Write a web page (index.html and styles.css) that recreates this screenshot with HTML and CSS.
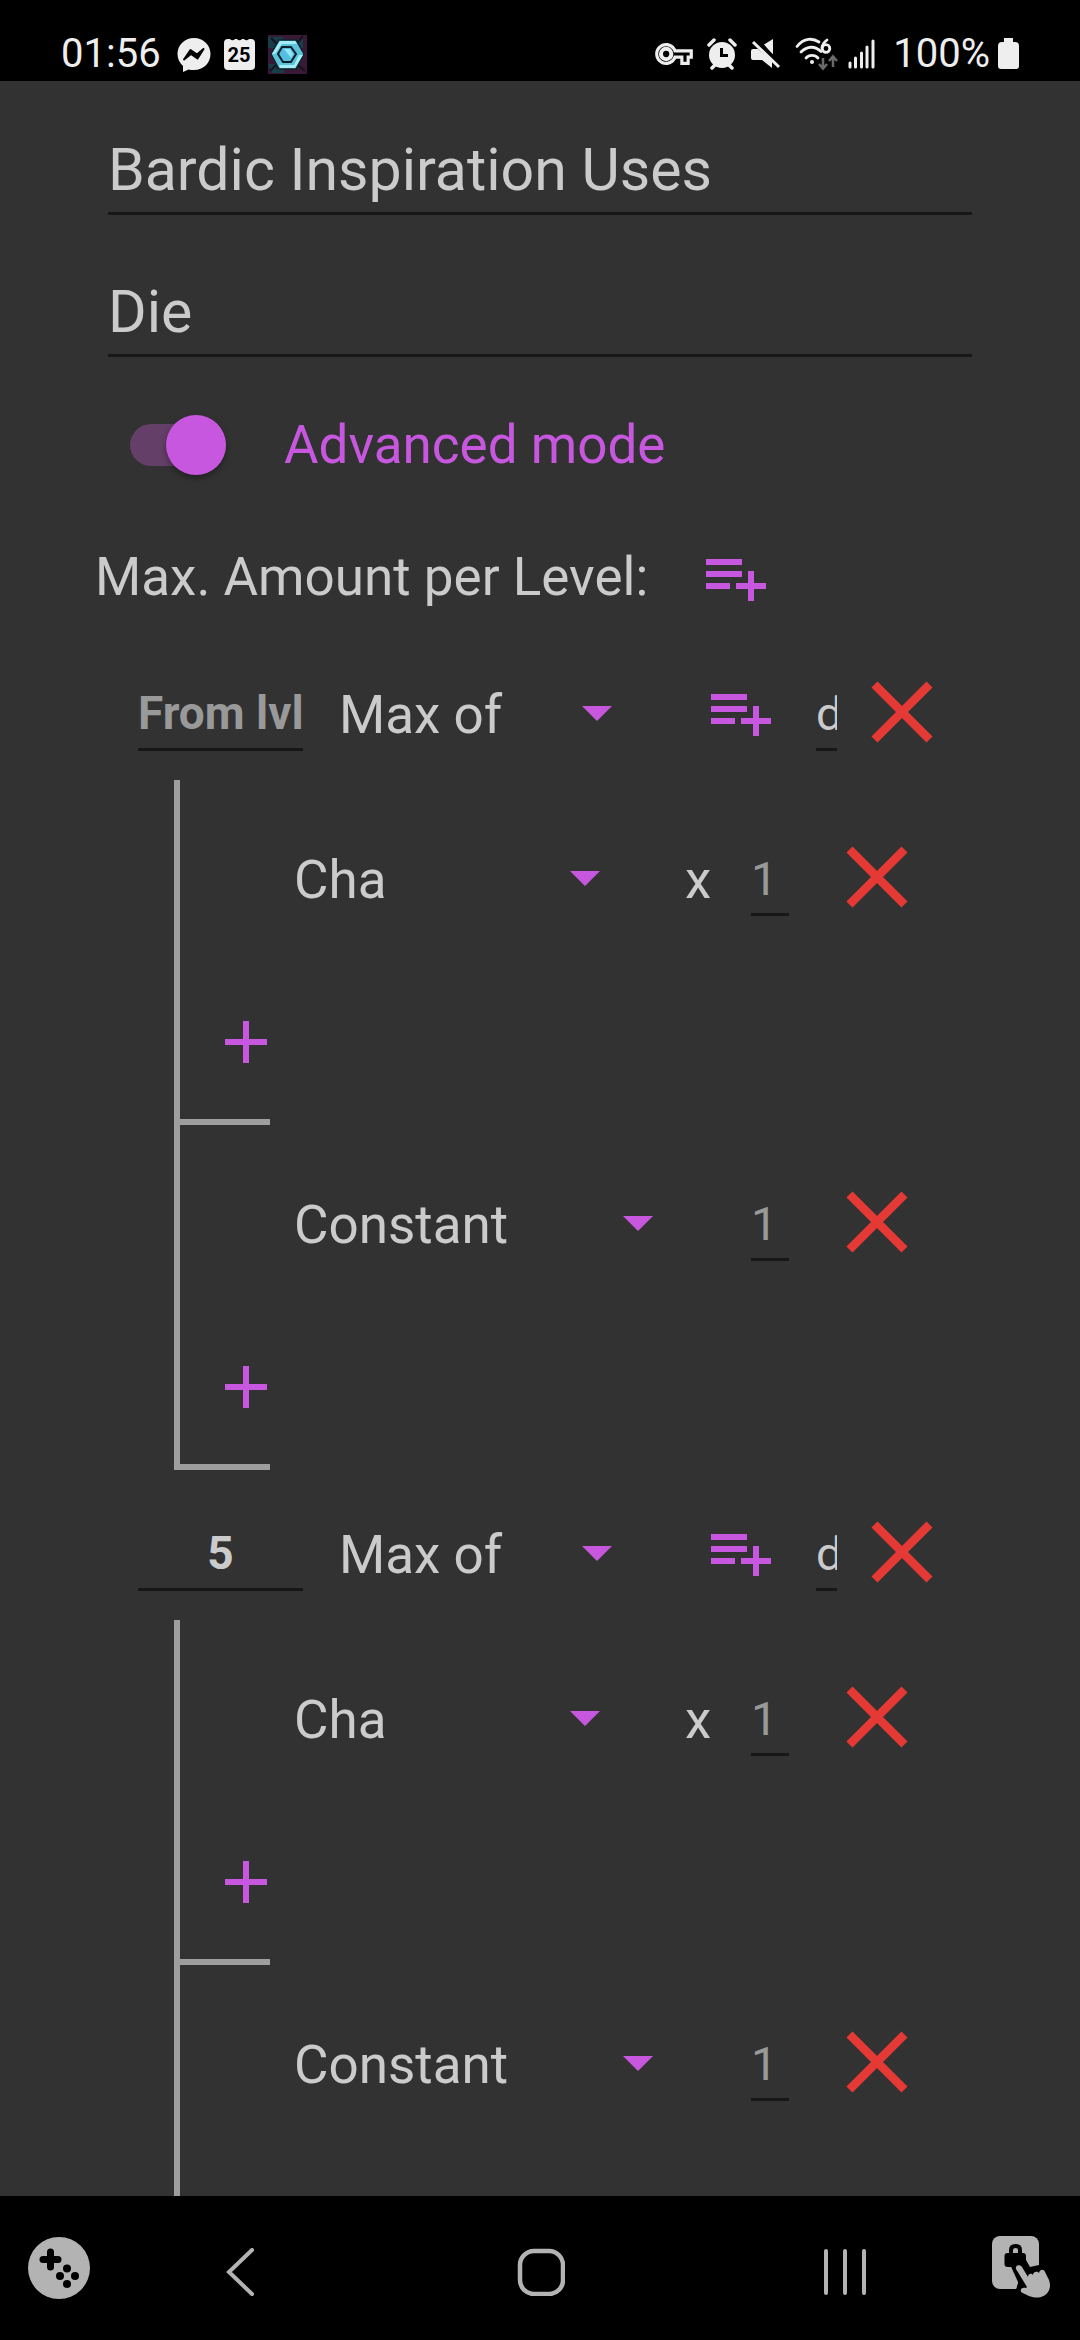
FILE: index.html
```html
<!DOCTYPE html>
<html lang="en">
<head>
  <meta charset="UTF-8">
  <meta name="viewport" content="width=device-width, initial-scale=1.0">
  <title>Bardic Inspiration Uses</title>
  <link rel="stylesheet" href="styles.css">
</head>
<body>
  <!-- shared icons -->
  <svg class="sprite" aria-hidden="true">
    <symbol id="playlist-add" viewBox="0 0 24 24">
      <path d="M14 10H2v2h12v-2zm0-4H2v2h12V6zm4 8v-4h-2v4h-4v2h4v4h2v-4h4v-2h-4zM2 16h8v-2H2v2z"/>
    </symbol>
    <symbol id="plus" viewBox="0 0 24 24">
      <path d="M19 13h-6v6h-2v-6H5v-2h6V5h2v6h6v2z"/>
    </symbol>
    <symbol id="cross" viewBox="0 0 72 72">
      <path d="M8.500 8.500L63.500 63.500M63.500 8.500L8.500 63.500" fill="none" stroke="currentColor" stroke-width="8.500"/>
    </symbol>
    <symbol id="caret" viewBox="0 0 24 24">
      <path d="M7 10l5 5 5-5z"/>
    </symbol>
  </svg>

  <header class="status-bar">
    <span class="status-text">01:56</span>
    <div class="status-left">
      <svg width="34" height="40" viewBox="0 0 34 40">
        <path fill="#eee" d="M17 4C7.500 4 .5 11 .5 20c0 5 2.200 9 5.500 12v6l5.500-2.600c1.700.4 3.500.6 5.500.6 9.500 0 16.500-7 16.500-16S26.500 4 17 4z"/>
        <path d="M7 25.500L13.500 16l6.500 4.500 6.500-5.500-6 9.500-6.500-4.500z" fill="#000" stroke="#000" stroke-width="2" stroke-linejoin="round"/>
      </svg>
      <svg width="31" height="40" viewBox="0 0 31 40">
        <path fill="#eee" d="M4 5h2a3 3 0 0 0 5 0h2a3 3 0 0 0 5 0h2a3 3 0 0 0 5 0h2q4 0 4 4v23q0 4-4 4H4q-4 0-4-4V9q0-4 4-4z"/>
        <text class="calendar-day" x="15" y="28" text-anchor="middle">25</text>
      </svg>
      <svg width="39" height="40" viewBox="0 0 39 40">
        <path fill="#391a36" d="M0 1h39v39H0z"/>
        <path fill="#173d49" d="M0 3h15v5H7v6H0zM30 5h5v9h-5zM0 30h8v5h8v4H4z"/>
        <path d="M3 4l9 9M2 37l8-8M29 9l6-7M30 31l7 6" stroke="#15151f" stroke-width="2"/>
        <path fill="#5bc3da" stroke="#12222c" stroke-width="1.500" d="M11 6h17l8 14-8 15H11L3 20z"/>
        <path fill="#a3edf5" d="M12 7h15l2 3H14L7 20l-3 0zM31 21h4l-8 13H12l-1-3h15z"/>
        <path fill="#54bfe0" stroke="#10212c" stroke-width="2" d="M14 13h9l5 7-5 8h-8l-5-8z"/>
        <path fill="#92e5f2" d="M16 15h6l3 5-2 4z"/>
      </svg>
    </div>
    <div class="status-right">
      <svg width="38" height="22" viewBox="0 5 24 14">
        <path fill="#eee" d="M22 19h-6v-4h-2.680c-1.140 2.420-3.600 4-6.320 4-3.860 0-7-3.140-7-7s3.140-7 7-7c2.720 0 5.170 1.580 6.320 4H24v6h-2v4zm-4-2h2v-4h2v-2H11.940l-.23-.67C11.010 8.340 9.110 7 7 7c-2.760 0-5 2.240-5 5s2.240 5 5 5c2.110 0 4.010-1.340 4.710-3.330l.23-.67H18v4z"/>
        <circle cx="7" cy="12" r="3.300" fill="none" stroke="#eee" stroke-width="2.600"/>
      </svg>
      <svg width="30" height="40" viewBox="0 0 30 40">
        <circle cx="15" cy="21" r="13" fill="#eee"/>
        <path d="M2 11l5-5M28 11l-5-5M5 34l4-4M25 34l-4-4" stroke="#eee" stroke-width="3.500" stroke-linecap="round"/>
        <path d="M14.500 14v7.500h6.500" fill="none" stroke="#000" stroke-width="3"/>
      </svg>
      <svg width="30" height="40" viewBox="0 0 30 40">
        <path fill="#eee" d="M13 10.500L22 5v16z"/>
        <path fill="#eee" d="M2 15h5l14 12v7L11 26H2q-2 0-2-2v-7q0-2 2-2z"/>
        <path d="M4 5l27 26" stroke="#000" stroke-width="3"/>
        <path d="M2 8l26 25" stroke="#eee" stroke-width="3"/>
      </svg>
      <svg class="wifi" width="43" height="40" viewBox="0 0 43 40">
        <g fill="none" stroke="#eee" stroke-width="2.800" stroke-linecap="round">
          <path d="M2 12.500C9 3.500 18 4 24 8"/>
          <path d="M6 18c6-6 14-6.500 20-.5"/>
          <path d="M11 24c3-3.500 9-3.500 12 0"/>
          <path d="M32 6c-4 3-5 6-5 8"/>
          <circle cx="31" cy="14.500" r="3.800"/>
        </g>
        <circle cx="17" cy="28" r="2" fill="#eee"/>
        <path d="M28 24v10m-4-4l4 4.500 4-4.500M38 33V23m-4 4l4-4.500 4 4.500" fill="none" stroke="#6a6a6a" stroke-width="2.500"/>
      </svg>
      <svg width="27" height="40" viewBox="0 0 27 40">
        <path d="M2 29v4M7.500 24v9M13.500 19v14M19 13v20M25 7v26" stroke="#eee" stroke-width="3" stroke-linecap="round"/>
      </svg>
      <div class="battery">
        <span class="status-text">100%</span>
        <svg width="21" height="40" viewBox="0 0 21 40">
          <path fill="#eee" d="M6 4h9v4h2q4 0 4 4v20q0 3-3 3H3q-3 0-3-3V12q0-4 4-4h2z"/>
        </svg>
      </div>
    </div>
  </header>

  <main class="content">
    <div class="fields">
      <input class="field" type="text" value="Bardic Inspiration Uses" aria-label="Name">
      <input class="field" type="text" value="Die" aria-label="Type">
    </div>

    <div class="switch-row">
      <input class="switch" type="checkbox" id="advanced-mode" checked>
      <label for="advanced-mode">Advanced mode</label>
    </div>

    <div class="levels-title">
      <span>Max. Amount per Level:</span>
      <button class="icon-btn" aria-label="Add level"><svg><use href="#playlist-add"/></svg></button>
    </div>

    <section class="level">
      <div class="level-head">
        <input class="small-input level-input" type="text" placeholder="From lvl" aria-label="From level">
        <div class="dropdown level-dropdown">
          <select aria-label="Operation"><option>Max of</option></select>
          <svg><use href="#caret"/></svg>
        </div>
        <button class="icon-btn add-btn" aria-label="Add term"><svg><use href="#playlist-add"/></svg></button>
        <input class="small-input die-input" type="text" value="d" aria-label="Die">
        <button class="icon-btn delete-btn" aria-label="Delete level"><svg><use href="#cross"/></svg></button>
      </div>
      <div class="tree">
        <div class="term">
          <div class="term-row">
            <div class="term-source">
              <div class="dropdown stat-dropdown">
                <select aria-label="Source"><option>Cha</option></select>
                <svg><use href="#caret"/></svg>
              </div>
              <span class="times">x</span>
            </div>
            <input class="small-input" type="text" placeholder="1" aria-label="Factor">
            <button class="icon-btn delete-btn" aria-label="Delete term"><svg><use href="#cross"/></svg></button>
          </div>
          <button class="icon-btn plus-btn" aria-label="Add"><svg><use href="#plus"/></svg></button>
        </div>
        <div class="term">
          <div class="term-row">
            <div class="term-source">
              <div class="dropdown constant-dropdown">
                <select aria-label="Source"><option>Constant</option></select>
                <svg><use href="#caret"/></svg>
              </div>
            </div>
            <input class="small-input" type="text" placeholder="1" aria-label="Value">
            <button class="icon-btn delete-btn" aria-label="Delete term"><svg><use href="#cross"/></svg></button>
          </div>
          <button class="icon-btn plus-btn" aria-label="Add"><svg><use href="#plus"/></svg></button>
        </div>
      </div>
    </section>

    <section class="level">
      <div class="level-head">
        <input class="small-input level-input" type="text" value="5" placeholder="From lvl" aria-label="From level">
        <div class="dropdown level-dropdown">
          <select aria-label="Operation"><option>Max of</option></select>
          <svg><use href="#caret"/></svg>
        </div>
        <button class="icon-btn add-btn" aria-label="Add term"><svg><use href="#playlist-add"/></svg></button>
        <input class="small-input die-input" type="text" value="d" aria-label="Die">
        <button class="icon-btn delete-btn" aria-label="Delete level"><svg><use href="#cross"/></svg></button>
      </div>
      <div class="tree">
        <div class="term">
          <div class="term-row">
            <div class="term-source">
              <div class="dropdown stat-dropdown">
                <select aria-label="Source"><option>Cha</option></select>
                <svg><use href="#caret"/></svg>
              </div>
              <span class="times">x</span>
            </div>
            <input class="small-input" type="text" placeholder="1" aria-label="Factor">
            <button class="icon-btn delete-btn" aria-label="Delete term"><svg><use href="#cross"/></svg></button>
          </div>
          <button class="icon-btn plus-btn" aria-label="Add"><svg><use href="#plus"/></svg></button>
        </div>
        <div class="term">
          <div class="term-row">
            <div class="term-source">
              <div class="dropdown constant-dropdown">
                <select aria-label="Source"><option>Constant</option></select>
                <svg><use href="#caret"/></svg>
              </div>
            </div>
            <input class="small-input" type="text" placeholder="1" aria-label="Value">
            <button class="icon-btn delete-btn" aria-label="Delete term"><svg><use href="#cross"/></svg></button>
          </div>
          <button class="icon-btn plus-btn" aria-label="Add"><svg><use href="#plus"/></svg></button>
        </div>
      </div>
    </section>
  </main>

  <nav class="nav-bar">
    <button aria-label="Game tools">
      <svg width="62" height="62" viewBox="0 0 62 62">
        <circle cx="31" cy="31" r="31" fill="#b3b3b3"/>
        <path d="M22.500 15v15M15 22.500h15" stroke="#000" stroke-width="7" stroke-linecap="round"/>
        <circle cx="39" cy="31.500" r="4"/>
        <circle cx="32" cy="39" r="4"/>
        <circle cx="47" cy="39" r="4"/>
        <circle cx="39" cy="47" r="4"/>
      </svg>
    </button>
    <div class="nav-main">
      <button aria-label="Back">
        <svg width="48" height="48" viewBox="0 0 48 48">
          <path d="M36 2L13 24l23 22" fill="none" stroke="#b3b3b3" stroke-width="4" stroke-linecap="round"/>
        </svg>
      </button>
      <button aria-label="Home">
        <svg width="48" height="48" viewBox="0 0 48 48">
          <rect x="3" y="3" width="43" height="43" rx="14" fill="none" stroke="#b3b3b3" stroke-width="4.500"/>
        </svg>
      </button>
      <button aria-label="Recents">
        <svg width="48" height="48" viewBox="0 0 48 48">
          <path d="M8 3v42M27 3v42M46 3v42" fill="none" stroke="#b3b3b3" stroke-width="4" stroke-linecap="round"/>
        </svg>
      </button>
    </div>
    <button aria-label="Touch lock">
      <svg width="60" height="66" viewBox="0 0 60 66">
        <rect x="0" y="1" width="47" height="53" rx="8" fill="#b3b3b3"/>
        <path d="M47 30l-9 2-4-7H16l10 22-2 7v4h25z" fill="#000"/>
        <rect x="12.500" y="18" width="21.500" height="14" rx="3"/>
        <path d="M19 19v-4q0-4 4.500-4t4.500 4v4" fill="none" stroke="#000" stroke-width="4"/>
        <path d="M17 33l9 15-2 6H12V33z" fill="#b3b3b3"/>
        <path fill="#b3b3b3" d="M24 34c-1-4 4-5 6-2l6 10c0-4 4-4 5-2 0-4 5-4 6-2 1-4 5-4 6-1l4 8c3 8-1 15-8 17-8 2-14-2-20-5-1-3 1-5 5-4l1-1z"/>
      </svg>
    </button>
  </nav>
</body>
</html>
```
FILE: styles.css
```css
* {
  margin: 0;
  padding: 0;
  box-sizing: border-box;
}

body {
  height: 100vh;
  display: flex;
  flex-direction: column;
  background: #323232;
  color: #cbcbcb;
  font-family: Roboto, sans-serif;
  font-size: 53px;
  line-height: 64px;
}

input,
select,
button {
  font: inherit;
  color: inherit;
  background: transparent;
  border: none;
  border-radius: 0;
  outline: none;
}

button {
  display: block;
  cursor: pointer;
}

svg {
  display: block;
}

.sprite {
  display: none;
}

/* status bar */
.status-bar {
  display: flex;
  flex-shrink: 0;
  align-items: center;
  justify-content: space-between;
  padding: 27px 61px 0;
  height: 81px;
  background: #000;
  color: #eee;
}

.status-text {
  font-size: 40px;
  line-height: 48px;
}

.status-left,
.status-right,
.battery {
  display: flex;
  align-items: center;
}

.status-left {
  gap: 13px;
  margin-left: 16px;
  margin-right: auto;
}

.status-right {
  gap: 14px;
}

.wifi {
  margin-right: -4px;
}

.battery {
  gap: 8px;
  padding-left: 4px;
}

.calendar-day {
  font-size: 20px;
  font-weight: 700;
}

/* content */
.content {
  flex: 1;
  min-height: 0;
  overflow-y: auto;
  scrollbar-width: none;
  padding-top: 53px;
}

.fields {
  display: grid;
  gap: 61px;
  margin: 0 108px 56px;
}

.field {
  width: 100%;
  height: 81px;
  padding-bottom: 8px;
  border-bottom: 3px solid #171717;
  font-size: 59px;
  line-height: 70px;
}

.switch-row {
  display: flex;
  align-items: center;
  gap: 58px;
  margin-bottom: 64px;
  padding-left: 130px;
  color: #c757de;
}

.switch {
  appearance: none;
  display: flex;
  align-items: center;
  justify-content: flex-start;
  width: 96px;
  height: 42px;
  border-radius: 21px;
  background: #5a5a5a;
}

.switch::after {
  content: "";
  flex-shrink: 0;
  width: 60px;
  height: 60px;
  border-radius: 50%;
  background: #bdbdbd;
  box-shadow: 0 3px 6px rgba(0, 0, 0, 0.35);
}

.switch:checked {
  justify-content: flex-end;
  background: #643f68;
}

.switch:checked::after {
  background: #c757de;
}

.levels-title {
  display: flex;
  align-items: center;
  gap: 52px;
  margin-bottom: 17px;
  padding-left: 95px;
}

.icon-btn {
  flex-shrink: 0;
  width: 72px;
  height: 72px;
  color: #c757de;
}

.icon-btn svg,
.dropdown svg {
  width: 72px;
  height: 72px;
  fill: currentColor;
}

.delete-btn {
  color: #e53935;
}

/* select with its arrow in the same grid cell */
.dropdown {
  display: grid;
  align-items: center;
}

.dropdown select {
  grid-area: 1 / 1;
  appearance: none;
  width: 100%;
  height: 70px;
  padding-top: 6px;
}

.dropdown svg {
  grid-area: 1 / 1;
  justify-self: end;
  color: #c757de;
  pointer-events: none;
}

.level-dropdown {
  width: 294px;
}

.stat-dropdown {
  width: 327px;
}

.constant-dropdown {
  width: 380px;
}

.small-input {
  width: 38px;
  height: 78px;
  padding: 12px 0 7px;
  border-bottom: 3px solid #171717;
  font-size: 47px;
  line-height: 56px;
}

.small-input::placeholder {
  color: #999;
  opacity: 1;
}

/* level */
.level-head {
  display: flex;
  align-items: center;
  height: 150px;
  padding: 14px 0 0 138px;
}

.level-input {
  width: 165px;
  margin-right: 36px;
  font-size: 46px;
  font-weight: 700;
  text-align: center;
}

.add-btn {
  margin: 0 39px 0 72px;
}

.die-input {
  width: 21px;
  margin-right: 29px;
}

.tree {
  margin-left: 174px;
  border-left: 6px solid #9e9e9e;
}

.term::after {
  content: "";
  display: block;
  width: 90px;
  height: 6px;
  margin-top: 41px;
  background: #9e9e9e;
}

.term-row {
  display: grid;
  grid-template-columns: 457px 38px 72px;
  align-items: center;
  height: 194px;
  padding-left: 114px;
}

.term-row .delete-btn {
  margin-left: 52px;
}

.term-source {
  display: flex;
  align-items: center;
}

.times {
  margin-left: 64px;
  padding-top: 6px;
}

.plus-btn {
  margin: 32px 0 0 30px;
}

/* navigation bar */
.nav-bar {
  display: flex;
  flex-shrink: 0;
  align-items: center;
  height: 144px;
  padding: 0 28px;
  background: #000;
}

.nav-main {
  display: flex;
  flex: 1;
  padding-top: 8px;
}

.nav-main button {
  display: flex;
  flex: 1;
  justify-content: center;
}
```
